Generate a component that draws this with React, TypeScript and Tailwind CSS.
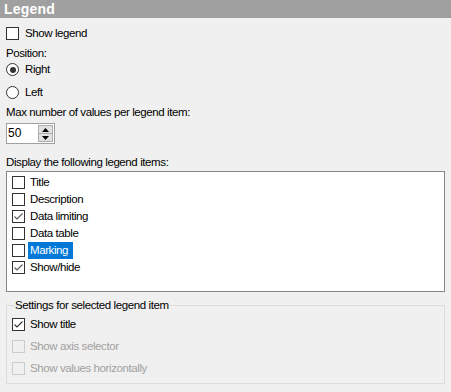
import React from "react";

function Check({ color = "#333" }: { color?: string }) {
  return (
    <svg width="11" height="11" viewBox="0 0 11 11" className="block">
      <path d="M1.5 5.5 L4 8 L9.5 2.5" fill="none" stroke={color} strokeWidth="1.1" />
    </svg>
  );
}

function Box({ checked, disabled, checkColor }: { checked?: boolean; disabled?: boolean; checkColor?: string }) {
  return (
    <span
      className={`flex h-[13px] w-[13px] shrink-0 items-center justify-center border ${
        disabled ? "border-[#cccccc] bg-[#f0f0f0]" : "border-[#333333] bg-white"
      }`}
    >
      {checked && <Check color={checkColor} />}
    </span>
  );
}

function Radio({ checked }: { checked?: boolean }) {
  return (
    <span className="flex h-[13px] w-[13px] shrink-0 items-center justify-center rounded-full border border-[#333333] bg-white">
      {checked && <span className="h-[6px] w-[6px] rounded-full bg-[#333333]" />}
    </span>
  );
}

const items = [
  { label: "Title", checked: false },
  { label: "Description", checked: false },
  { label: "Data limiting", checked: true },
  { label: "Data table", checked: false },
  { label: "Marking", checked: false, selected: true },
  { label: "Show/hide", checked: true },
];

export default function App() {
  return (
    <div className="h-[392px] w-[451px] overflow-hidden bg-[#f0f0f0] font-['Liberation_Sans',Arial,sans-serif] text-[11.5px] leading-[13px] tracking-[-0.4px] text-black">
      {/* Header */}
      <div className="h-[18px] bg-[#a0a0a0] pl-[4px] text-[14px] font-bold leading-[18px] tracking-[0.2px] text-white">
        Legend
      </div>

      <div className="px-[6px]">
        <label className="mt-[9px] flex h-[13px] items-center gap-[6px]">
          <Box />
          <span>Show legend</span>
        </label>

        <div className="mt-[7px] h-[13px]">Position:</div>

        <label className="mt-[3px] flex h-[13px] items-center gap-[6px]">
          <Radio checked />
          <span>Right</span>
        </label>
        <label className="mt-[10px] flex h-[13px] items-center gap-[6px]">
          <Radio />
          <span>Left</span>
        </label>

        <div className="mt-[7px] h-[13px]">Max number of values per legend item:</div>

        {/* Spinner */}
        <div className="mt-[4px] flex h-[21px] w-[49px] items-stretch border border-[#a0a0a0] bg-white">
          <div className="flex flex-1 items-center pl-[1px] text-[12px] tracking-normal">50</div>
          <div className="my-[1px] mr-[1px] flex w-[15px] flex-col">
            <div className="flex flex-1 items-center justify-center border border-[#adadad] bg-[#e1e1e1]">
              <svg width="7" height="4" viewBox="0 0 7 4" className="block">
                <path d="M0 4 L3.5 0 L7 4 Z" fill="#000" />
              </svg>
            </div>
            <div className="flex flex-1 items-center justify-center border border-t-0 border-[#adadad] bg-[#e1e1e1]">
              <svg width="7" height="4" viewBox="0 0 7 4" className="block">
                <path d="M0 0 L3.5 4 L7 0 Z" fill="#000" />
              </svg>
            </div>
          </div>
        </div>

        <div className="mt-[12px] h-[13px]">Display the following legend items:</div>

        {/* List */}
        <div className="mt-[2px] h-[121px] border border-[#828790] bg-white pt-[2px] pl-[5px]">
          {items.map((it) => (
            <div key={it.label} className="flex h-[17px] items-center">
              <Box checked={it.checked} checkColor="#5a5a5a" />
              <span
                className={`ml-[3px] flex h-[17px] items-center pl-[2px] pr-[5px] ${
                  it.selected ? "bg-[#0078d7] text-white" : ""
                }`}
              >
                {it.label}
              </span>
            </div>
          ))}
        </div>

        {/* Group box */}
        <fieldset className="mt-[7px] border border-[#dcdcdc] px-[5px] pb-[8px]">
          <legend className="ml-[2px] h-[13px] px-[1px]">Settings for selected legend item</legend>
          <label className="mt-[6px] flex h-[13px] items-center gap-[5px]">
            <Box checked />
            <span>Show title</span>
          </label>
          <label className="mt-[9px] flex h-[13px] items-center gap-[5px] text-[#a0a0a0]">
            <Box disabled />
            <span>Show axis selector</span>
          </label>
          <label className="mt-[9px] flex h-[13px] items-center gap-[5px] text-[#a0a0a0]">
            <Box disabled />
            <span>Show values horizontally</span>
          </label>
        </fieldset>
      </div>
    </div>
  );
}
